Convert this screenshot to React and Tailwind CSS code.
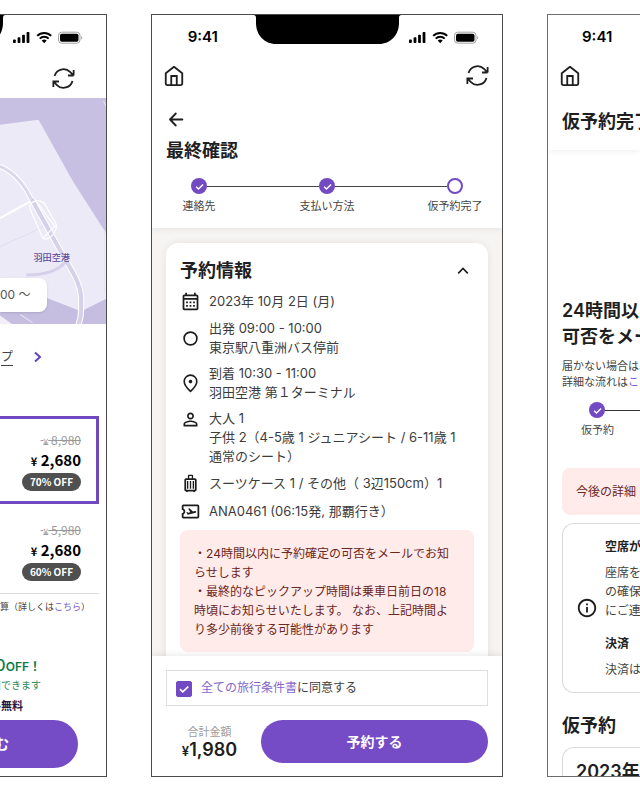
import {
  MdOutlineAirplaneTicket,
  MdOutlineCalendarMonth,
  MdOutlineInfo,
  MdOutlineLuggage,
  MdPersonOutline,
} from 'react-icons/md';

const steps = [
  { label: '連絡先', done: true },
  { label: '支払い方法', done: true },
  { label: '仮予約完了', done: false },
];

const plans = [
  { id: 1, regular: '8,980', price: '2,680', off: '70% OFF', selected: true },
  { id: 2, regular: '5,980', price: '2,680', off: '60% OFF', selected: false },
];

const HomeIcon = () => (
  <svg width="22" height="22" viewBox="0 0 24 24" fill="none" stroke="currentColor" strokeWidth="2" strokeLinejoin="round">
    <path d="M3 9l9-7 9 7v11a2 2 0 0 1-2 2H5a2 2 0 0 1-2-2z" />
    <path d="M9 22V12h6v10" strokeLinejoin="miter" />
  </svg>
);

const RefreshIcon = () => (
  <svg width="27" height="27" viewBox="0 0 24 24" fill="none" stroke="currentColor" strokeWidth="1.6">
    <path d="M16.023 9.348h4.992M2.985 19.644v-4.992h4.992m-4.993 0 3.181 3.183a8.25 8.25 0 0 0 13.803-3.7M4.031 9.865a8.25 8.25 0 0 1 13.803-3.7l3.181 3.182m0-4.991v4.99" />
  </svg>
);

const CircleIcon = () => (
  <svg width="21" height="21" viewBox="0 0 21 21" fill="none" stroke="currentColor" strokeWidth="1.7">
    <circle cx="10.5" cy="10.5" r="6.4" />
  </svg>
);

const PinIcon = () => (
  <svg width="21" height="21" viewBox="0 0 21 21" fill="none" stroke="currentColor" strokeWidth="1.6">
    <path d="M10.5 18.4C6.3 14.4 4.2 11.4 4.2 8.4a6.3 6.3 0 0 1 12.6 0c0 3-2.1 6-6.3 10z" strokeLinejoin="round" />
    <circle cx="10.5" cy="8.6" r="1.8" fill="currentColor" stroke="none" />
  </svg>
);

const CheckIcon = ({ size, className = '' }) => (
  <svg width={size} height={size} viewBox="0 0 16 16" fill="none" stroke="white" strokeWidth="1.5" className={className}>
    <path d="M4.4 8.2l2.5 2.4 4.9-4.8" />
  </svg>
);

const Notch = () => (
  <svg width="147" height="29" viewBox="0 0 147 29" className="shrink-0">
    <path d="M0 0h147c-1.6.3-2 1.4-2 3.5V8c0 12-8.5 21-20 21H22C10.5 29 2 20 2 8V3.5C2 1.4 1.6.3 0 0z" fill="black" />
  </svg>
);

const StatusIcons = () => (
  <svg width="70" height="14" viewBox="0 0 70 14" className="ml-2 shrink-0">
    <rect x="0" y="8.5" width="2.8" height="3.5" rx="0.8" />
    <rect x="4.6" y="6.3" width="2.8" height="5.7" rx="0.8" />
    <rect x="9.1" y="3.8" width="2.8" height="8.2" rx="0.8" />
    <rect x="13.6" y="1" width="2.8" height="11" rx="0.8" />
    <g fill="none" stroke="black" strokeWidth="1.9">
      <path d="M24.2 4.9a10 10 0 0 1 14 0" />
      <path d="M26.7 7.6a6.4 6.4 0 0 1 9 0" />
    </g>
    <path d="M31.2 12.2l-2.5-2.6a3.6 3.6 0 0 1 5 0z" />
    <rect x="45.5" y="1.2" width="21.5" height="11" rx="3.2" fill="none" stroke="#a3a3a3" />
    <rect x="47" y="2.7" width="18.5" height="8" rx="1.8" />
    <path d="M68.2 5v3.5c1.4-.6 1.4-2.9 0-3.5z" fill="#a3a3a3" />
  </svg>
);

const Time = () => <p className="text-[15px] leading-5 font-semibold text-black">9:41</p>;

const StepDot = ({ done }) =>
  done ? (
    <span className="flex size-4 shrink-0 items-center justify-center rounded-full bg-[#724ac4]">
      <CheckIcon size={15} />
    </span>
  ) : (
    <span className="size-4 shrink-0 rounded-full border-2 border-[#724ac4] bg-white" />
  );

const Notice = ({ children, className = '' }) => (
  <div className={`rounded-lg bg-[#ffebe9] px-3.5 text-xs leading-[19px] text-[#6b2723] ${className}`}>
    {children}
  </div>
);

const InfoRow = ({ icon, children }) => (
  <li className="flex items-center gap-2">
    <span className="shrink-0 text-[#1c1c1c]">{icon}</span>
    <div>{children}</div>
  </li>
);

const AirportMap = () => (
  <svg className="h-[226px] w-full shrink-0" viewBox="0 0 106 226" preserveAspectRatio="xMaxYMid slice">
    <rect width="106" height="226" fill="#c8c0e2" />
    <path d="M0 28l38-5 34 61 34 53v62l-26 13-36-14-20 8-24-8z" fill="#edeaf7" />
    <path d="M0 198h44l36 14 26-13v27H14L0 214z" fill="#c6bee1" />
    <path d="M0 216l14 10H0z" fill="#f1eef9" />
    <path d="M0 120l31-17" fill="none" stroke="white" strokeWidth="2" />
    <path d="M0 148c18-9 32-12 45-22" fill="none" stroke="#e1dcf1" strokeWidth="1" />
    <path d="M0 69c12 5 24 17 32 35" fill="none" stroke="white" strokeWidth="5" />
    <path d="M0 69c12 5 24 17 32 35" fill="none" stroke="#dcd7ec" strokeWidth="3" />
    <path d="M31 101l34 61c8 13 14 23 15 36v12c0 6-1 11-3 16" fill="none" stroke="white" strokeWidth="6" />
    <path d="M31 101l34 61c8 13 14 23 15 36v12c0 6-1 11-3 16" fill="none" stroke="#d6d0ea" strokeWidth="4" />
    <path d="M66 162c-10 11-22 14-40 14" fill="none" stroke="#d6d0ea" strokeWidth="3" />
    <path d="M30 112c-4-7 8-13 14-6l11 19c3 8-9 20-13 14zM36 104l18 24-12 12" fill="none" stroke="white" strokeWidth="1.2" />
    <path d="M102 5l3 5M103 132v62M20 215l12 8" fill="none" stroke="#e7e2f4" strokeWidth="1" />
    <text x="33" y="162" fontSize="9" fontWeight="500" fill="#5f4c9d">羽田空港</text>
  </svg>
);

const SearchScreen = () => (
  <section className="flex min-w-0 flex-col overflow-hidden border border-l-0 border-[#4c4c4c] bg-white">
    <div className="flex h-[46px] shrink-0 justify-end">
      <Notch />
      <div className="w-[101px] shrink-0 pt-4">
        <StatusIcons />
      </div>
    </div>
    <div className="flex h-[37px] shrink-0 items-start justify-end pt-1 pr-[29px]">
      <button type="button" aria-label="更新"><RefreshIcon /></button>
    </div>

    <div className="grid shrink-0">
      <div className="col-start-1 row-start-1 flex">
        <AirportMap />
      </div>
      <div className="z-10 col-start-1 row-start-1 mr-[61px] mb-3 flex h-[34px] items-center justify-end self-end rounded-r-lg bg-white pr-4 text-xs whitespace-nowrap text-[#555] shadow-sm">
        00 〜
      </div>
    </div>

    <div className="flex h-[66px] shrink-0 items-center justify-end gap-5 pr-[63px] text-[#444]">
      <a href="#map" className="text-xs underline underline-offset-4">プ</a>
      <svg width="10" height="12" viewBox="0 0 10 12" fill="none" stroke="#6344bd" strokeWidth="2">
        <path d="M2 1.5L7 6l-5 4.5" />
      </svg>
    </div>

    <ul className="mt-[26px] mr-[7px] shrink-0 font-['Noto_Sans_CJK_JP',sans-serif]">
      {plans.map((plan) => (
        <li
          key={plan.id}
          className={
            plan.selected
              ? 'flex flex-col items-end border-[3px] border-l-0 border-[#7048c0] pt-[11px] pr-[15px] pb-2.5'
              : 'flex flex-col items-end border-b border-[#dcdcdc] pt-4 pr-[18px] pb-3'
          }
        >
          <p className="text-xs leading-5 text-[#999] line-through">
            &nbsp;<span className="text-[9px] leading-none">¥</span> {plan.regular}
          </p>
          <p className="text-[15px] leading-5 font-bold text-black">
            <span className="text-[11px] leading-none">¥</span> {plan.price}
          </p>
          <p className="mt-[3px] rounded-full bg-[#505050] px-2 text-[10px] leading-[18px] font-bold text-white">
            {plan.off}
          </p>
        </li>
      ))}
    </ul>

    <p className="mt-[5px] flex shrink-0 justify-end pr-4 text-[9px] leading-4 whitespace-nowrap text-[#444]">
      算（詳しくは<a href="#detail" className="text-[#7658c4]">こちら</a>）
    </p>

    <div className="mt-[42px] flex shrink-0 flex-col items-end whitespace-nowrap">
      <p className="pr-[65px] text-xs leading-5 font-semibold text-[#0b7a45]">
        <span className="text-base leading-none font-medium">0</span>OFF！
      </p>
      <p className="pr-[65px] text-[10px] leading-4 text-[#2b8a5b]">用できます</p>
      <p className="mt-[5px] pr-[83px] text-[11px] leading-4 font-semibold text-[#2b1747]">ル無料</p>
    </div>
    <button
      type="button"
      className="mt-1.5 mr-7 flex h-12 shrink-0 items-center justify-end rounded-r-full bg-[#764bc6] pr-[69px] text-sm font-semibold text-white"
    >
      む
    </button>
  </section>
);

const ConfirmScreen = () => (
  <section className="flex min-w-0 flex-col overflow-hidden border border-[#4c4c4c] bg-white">
    <header className="z-10 shrink-0 bg-white shadow-[0_2px_6px_rgba(0,0,0,0.06)]">
      <div className="flex h-[46px]">
        <div className="flex flex-1 justify-center pt-3">
          <Time />
        </div>
        <Notch />
        <div className="flex-1 pt-4">
          <StatusIcons />
        </div>
      </div>
      <div className="flex h-[29px] items-center justify-between px-[11px]">
        <button type="button" aria-label="ホーム"><HomeIcon /></button>
        <button type="button" aria-label="更新"><RefreshIcon /></button>
      </div>
      <div className="px-3.5 pb-3.5">
        <button type="button" aria-label="戻る" className="mt-[18px] block">
          <svg width="20" height="22" viewBox="0 0 20 22" fill="none" stroke="currentColor" strokeWidth="1.8" strokeLinecap="round" strokeLinejoin="round">
            <path d="M16.400 11.500H4M9.800 5.500L4 11.500l5.800 6" />
          </svg>
        </button>
        <h1 className="mt-2 text-lg leading-[26px] font-semibold">最終確認</h1>
        <div className="mt-3.5 flex items-center px-[25px]">
          <StepDot done={steps[0].done} />
          <span className="h-px flex-1 bg-[#444]" />
          <StepDot done={steps[1].done} />
          <span className="h-px flex-1 bg-[#444]" />
          <StepDot done={steps[2].done} />
        </div>
        <ol className="mt-1 flex justify-between px-px text-[11px] leading-4 text-[#444]">
          {steps.map((step) => (
            <li key={step.label} className="w-16 text-center whitespace-nowrap">{step.label}</li>
          ))}
        </ol>
      </div>
    </header>

    <main className="min-h-0 flex-1 overflow-hidden bg-[#f6f5f3] px-3.5 pt-[15px]">
      <div className="rounded-xl bg-white px-3.5 pt-3.5 pb-6 shadow-[0_0_8px_rgba(0,0,0,0.08)]">
        <div className="flex items-center justify-between pr-1">
          <h2 className="text-lg leading-7 font-semibold">予約情報</h2>
          <button type="button" aria-label="閉じる">
            <svg width="14" height="14" viewBox="0 0 14 14" fill="none" stroke="currentColor" strokeWidth="1.7">
              <path d="M2.2 9.300L7 4.500l4.800 4.800" />
            </svg>
          </button>
        </div>

        <ul className="mt-1.5 flex flex-col gap-[7px] text-[13px] leading-[19px] whitespace-nowrap text-[#3c3c3c]">
          <InfoRow icon={<MdOutlineCalendarMonth size={21} />}>2023年 10月 2日 (月)</InfoRow>
          <InfoRow icon={<CircleIcon />}>
            <p>出発 09:00 - 10:00</p>
            <p>東京駅八重洲バス停前</p>
          </InfoRow>
          <InfoRow icon={<PinIcon />}>
            <p>到着 10:30 - 11:00</p>
            <p>羽田空港 第１ターミナル</p>
          </InfoRow>
          <li className="flex items-start gap-2">
            <span className="shrink-0 text-[#1c1c1c]"><MdPersonOutline size={21} /></span>
            <div>
              <p>大人 1</p>
              <p>
                子供 2（4-5歳 1 ジュニアシート / 6-11歳 1
                <br />
                通常のシート）
              </p>
            </div>
          </li>
          <InfoRow icon={<MdOutlineLuggage size={21} />}>スーツケース 1 / その他（ 3辺150cm）1</InfoRow>
          <InfoRow icon={<MdOutlineAirplaneTicket size={21} />}>ANA0461 (06:15発, 那覇行き）</InfoRow>
        </ul>

        <Notice className="mt-2 pt-3.5 pb-[13px]">
          <p>
            ・24時間以内に予約確定の可否をメールでお知
            <br />
            らせします
          </p>
          <p>
            ・最終的なピックアップ時間は乗車日前日の18
            <br />
            時頃にお知らせいたします。 なお、上記時間よ
            <br />
            り多少前後する可能性があります
          </p>
        </Notice>
      </div>
    </main>

    <footer className="z-10 shrink-0 bg-white px-3.5 pt-3.5 pb-[13px] shadow-[0_-2px_6px_rgba(0,0,0,0.08)]">
      <div className="flex h-9 items-center gap-2.5 border border-[#dedede] px-2">
        <span className="grid size-4 shrink-0 place-items-center">
          <input
            id="agree"
            type="checkbox"
            defaultChecked
            className="peer col-start-1 row-start-1 size-4 appearance-none rounded-xs border border-[#724ac4] checked:bg-[#724ac4]"
          />
          <CheckIcon size={18} className="pointer-events-none col-start-1 row-start-1 hidden peer-checked:block" />
        </span>
        <label htmlFor="agree" className="text-xs text-[#3c3c3c]">
          <a href="#terms" className="text-[#8365cc]">全ての旅行条件書</a>に同意する
        </label>
      </div>
      <div className="mt-3.5 flex items-center gap-2">
        <div className="w-[87px] shrink-0 text-center">
          <p className="text-[11px] leading-4 text-[#9b9b9b]">合計金額</p>
          <p className="text-lg leading-5 font-semibold">
            <span className="text-[13px] leading-none">¥</span>1,980
          </p>
        </div>
        <button type="button" className="h-[43px] flex-1 rounded-full bg-[#764bc6] text-sm font-semibold text-white">
          予約する
        </button>
      </div>
    </footer>
  </section>
);

const CompleteScreen = () => (
  <section className="flex min-w-0 flex-col overflow-hidden border border-r-0 border-[#6c6c6c] bg-white whitespace-nowrap">
    <header className="shrink-0 pb-[15px] shadow-[0_2px_6px_rgba(0,0,0,0.06)]">
      <div className="h-[46px] pt-3 pl-[34px]">
        <Time />
      </div>
      <div className="flex h-[29px] items-center pl-[11px]">
        <button type="button" aria-label="ホーム"><HomeIcon /></button>
      </div>
      <h1 className="mt-[19px] pl-3.5 text-lg leading-[26px] font-semibold">仮予約完了</h1>
    </header>

    <div className="mt-[148px] flex flex-col pl-3.5">
      <h2 className="text-lg leading-[26px] font-semibold">
        24時間以
        <br />
        可否をメー
      </h2>
      <p className="mt-2 text-[11px] leading-4 text-[#444]">
        届かない場合は、
        <br />
        詳細な流れは<a href="#flow" className="text-[#7658d8]">こち</a>
      </p>
      <div className="mt-3 flex items-center pl-[27px]">
        <StepDot done />
        <span className="h-px flex-1 bg-[#333]" />
      </div>
      <p className="mt-1 pl-[19px] text-[11px] leading-4 text-[#444]">仮予約</p>

      <Notice className="mt-[30px] rounded-r-none py-3.5">今後の詳細</Notice>

      <div className="mt-2 flex items-center gap-[7px] rounded-l-xl border border-r-0 border-[#d9d9d9] py-[13px] pl-[13px] text-xs leading-[19px] text-[#444]">
        <MdOutlineInfo size={22} className="shrink-0 text-[#1c1c1c]" />
        <div>
          <h3 className="font-semibold text-[#222]">空席が</h3>
          <p className="mt-[7px]">
            座席を
            <br />
            の確保
            <br />
            にご連
          </p>
          <h3 className="mt-3.5 font-semibold text-[#222]">決済</h3>
          <p className="mt-[7px]">決済は</p>
        </div>
      </div>

      <h2 className="mt-5 text-lg leading-[26px] font-semibold">仮予約</h2>
      <div className="mt-2 rounded-tl-xl border border-r-0 border-b-0 border-[#d9d9d9] pt-2.5 pl-[13px]">
        <p className="text-lg leading-7 font-semibold">2023年</p>
      </div>
    </div>
  </section>
);

export default function App() {
  return (
    <div className="grid h-screen grid-cols-[minmax(0,107fr)_352px_minmax(0,93fr)] gap-11 overflow-hidden bg-white py-3.5 font-[Inter,'Noto_Sans_CJK_JP',sans-serif] text-[#1f1f1f]">
      <SearchScreen />
      <ConfirmScreen />
      <CompleteScreen />
    </div>
  );
}
